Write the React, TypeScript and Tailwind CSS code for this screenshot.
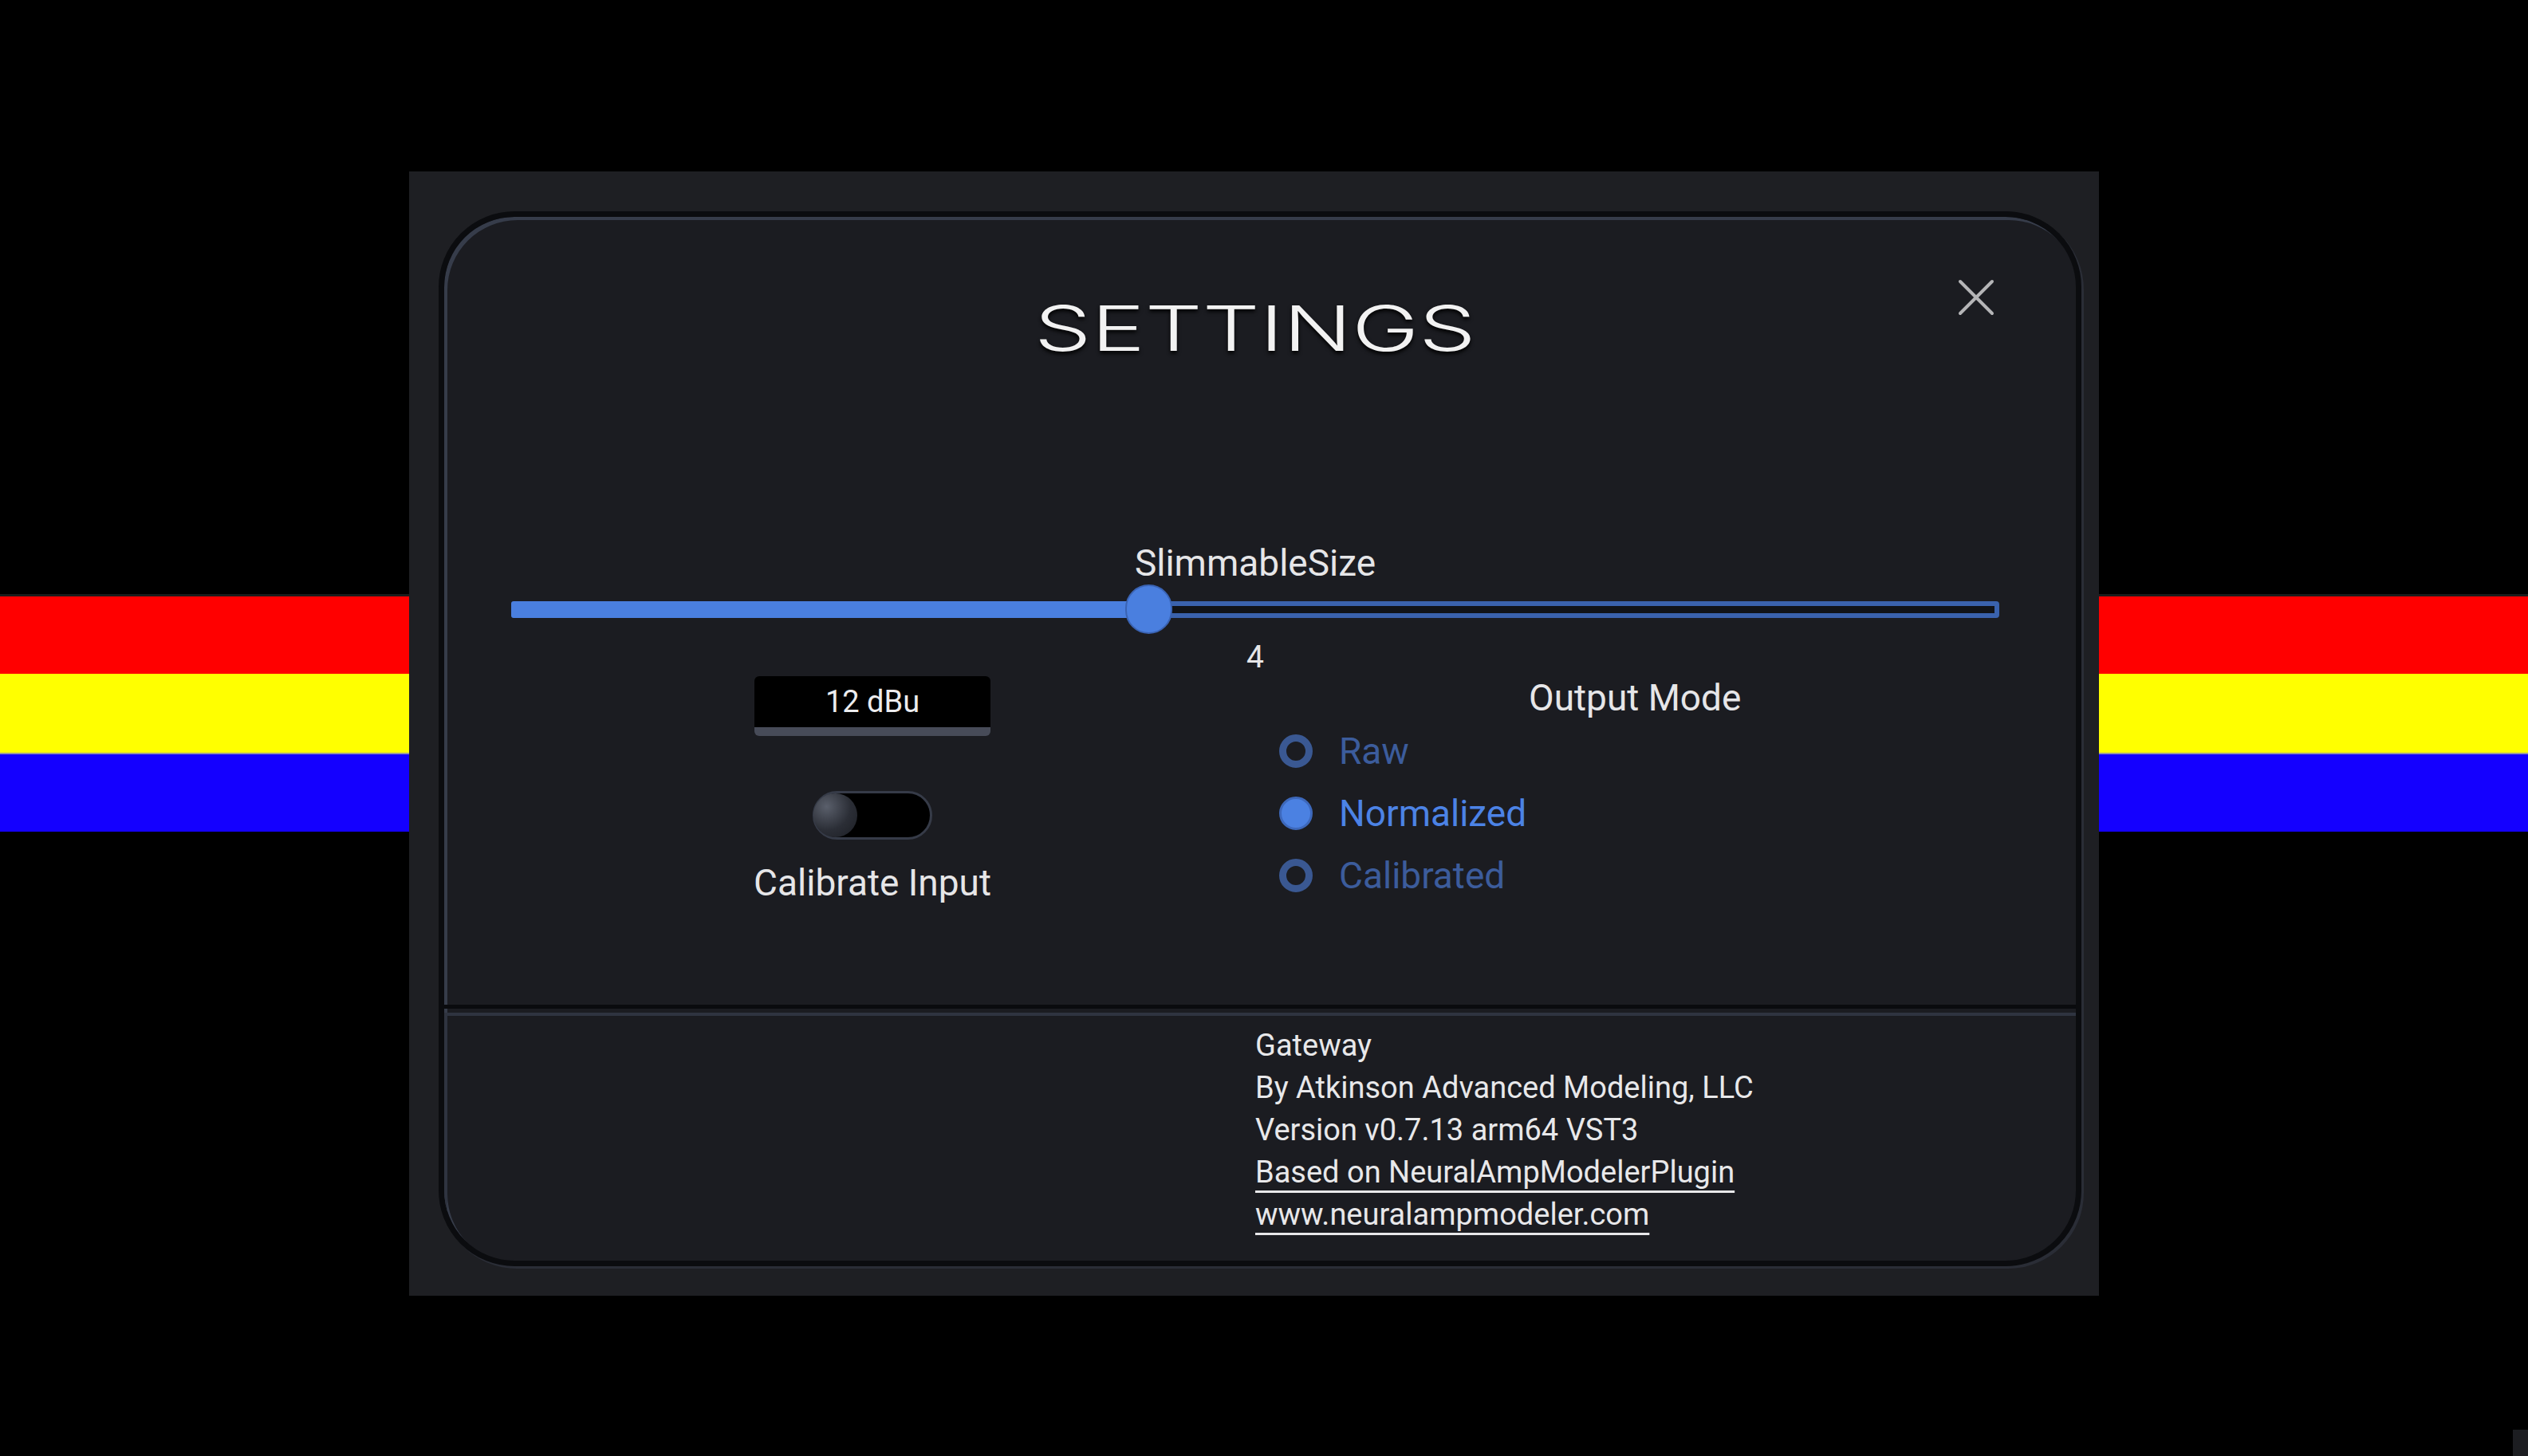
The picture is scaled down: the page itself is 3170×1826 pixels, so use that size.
const LABEL = "font-['Roboto',sans-serif] text-[46px] leading-none text-[#e6e6e8]";
const INFO = "font-['Roboto',sans-serif] text-[38px] leading-[53px] text-[#e8e8ea]";

function CloseIcon() {
  return (
    <svg width="46" height="46" viewBox="0 0 46 46" fill="none">
      <path d="M3 3L43 43M43 3L3 43" stroke="#b5b5b7" strokeWidth="4" strokeLinecap="round" />
    </svg>
  );
}

function Stripes() {
  return (
    <div className="flex flex-col">
      <div className="h-[3px] bg-[#1c1c1c]" />
      <div className="h-[97px] bg-[#ff0000]" />
      <div className="h-[99px] bg-[#ffff00]" />
      <div className="h-[2px] bg-[#9a9a9a]" />
      <div className="h-[97px] bg-[#1400ff]" />
    </div>
  );
}

function Radio({ label, on }: { label: string; on?: boolean }) {
  return (
    <div className="flex items-center gap-[33px] h-[42px]">
      {on ? (
        <div className="w-[42px] h-[42px] rounded-full bg-[#4b81e2] border-[3px] border-[#3d68bb]" />
      ) : (
        <div className="w-[42px] h-[42px] rounded-full border-[9px] border-[#3a5892]" />
      )}
      <span
        className={
          "font-['Roboto',sans-serif] text-[46px] leading-none " +
          (on ? "text-[#4c83e6]" : "text-[#3c5c9c]")
        }
      >
        {label}
      </span>
    </div>
  );
}

function Slider() {
  // filled up to thumb centre (value 4)
  return (
    <div className="relative h-[58px] flex items-center">
      <div className="w-[799px] h-[21px] bg-[#4a7fdf] rounded-l-[3px]" />
      <div className="flex-1 h-[21px] border-[6px] border-[#3a62ad] bg-[#111318] rounded-r-[4px]" />
      <div className="absolute left-[770px] -top-[2px] w-[59px] h-[62px] rounded-full bg-[#4a7fdf] border-[2px] border-[#3a63b3]" />
    </div>
  );
}

export default function App() {
  return (
    <div className="w-[3170px] h-[1826px] bg-black flex overflow-hidden">
      <div className="w-[513px] pt-[745px]">
        <Stripes />
      </div>

      <div className="w-[2119px] h-[1410px] mt-[215px] bg-[#1e1f23] pt-[50px] pl-[37px] pr-[22px] pb-[37px] flex">
        <div className="flex-1 flex flex-col rounded-[95px] border-[7px] border-[#0b0c0f] bg-[#1b1c21] shadow-[inset_4px_4px_0_#363c4a,3px_3px_0_#2a2d36] overflow-hidden">
          {/* top section */}
          <div className="h-[988px] pl-[84px] pr-[96px] flex flex-col">
            <div className="h-[280px] grid grid-cols-[1fr_auto_1fr] items-center">
              <div />
              <div className="font-[Inter,sans-serif] font-light text-[78px] leading-none text-[#f2f2f2] scale-x-[1.45] [text-shadow:0_3px_4px_#000]">
                SETTINGS
              </div>
              <div className="justify-self-end self-start mt-[78px] mr-[6px]">
                <CloseIcon />
              </div>
            </div>

            <div className={LABEL + " mt-[129px] h-[50px] flex items-center justify-center"}>SlimmableSize</div>
            <div className="mt-[4px]">
              <Slider />
            </div>
            <div className="mt-[11px] h-[40px] flex items-center justify-center font-['Roboto',sans-serif] text-[39px] leading-none text-[#e6e6e8]">
              4
            </div>

            <div className="flex">
              <div className="w-[906px] flex flex-col items-center">
                <div className="mt-[4px] w-[296px] h-[75px] bg-black rounded-[6px] border-b-[11px] border-[#474b58] flex items-center justify-center font-['Roboto',sans-serif] text-[38px] leading-none text-[#ececee]">
                  12 dBu
                </div>
                <div className="mt-[69px] w-[150px] h-[61px] rounded-full bg-black border-[3px] border-[#363b48] flex items-center">
                  <div className="w-[55px] h-[55px] -ml-[2px] rounded-full bg-[radial-gradient(circle_at_30%_30%,#5a5f6b,#2b2e36_55%,#1c1e24)]" />
                </div>
                <div className={LABEL + " mt-[31px] h-[46px] flex items-center"}>Calibrate Input</div>
              </div>
              <div className="flex-1 flex flex-col">
                <div className={LABEL + " mt-[8px] h-[46px] flex items-center pl-[370px]"}>Output Mode</div>
                <div className="mt-[23px] pl-[57px] flex flex-col gap-[36px]">
                  <Radio label="Raw" />
                  <Radio label="Normalized" on />
                  <Radio label="Calibrated" />
                </div>
              </div>
            </div>
          </div>

          {/* divider */}
          <div className="h-[5px] bg-[#0a0b0e]" />
          <div className="h-[5px]" />

          {/* bottom section */}
          <div className="flex-1 shadow-[inset_4px_4px_0_#2f3440] pt-[15px] pl-[1017px]">
            <div className={INFO}>Gateway</div>
            <div className={INFO}>By Atkinson Advanced Modeling, LLC</div>
            <div className={INFO}>Version v0.7.13 arm64 VST3</div>
            <div className={INFO}>
              <span className="underline decoration-[3px] underline-offset-[10px]">Based on NeuralAmpModelerPlugin</span>
            </div>
            <div className={INFO}>
              <span className="underline decoration-[3px] underline-offset-[10px]">www.neuralampmodeler.com</span>
            </div>
          </div>
        </div>
      </div>

      <div className="flex-1 flex flex-col pt-[745px]">
        <Stripes />
        <div className="mt-auto self-end w-[19px] h-[33px] bg-[#1c1d21]" />
      </div>
    </div>
  );
}
